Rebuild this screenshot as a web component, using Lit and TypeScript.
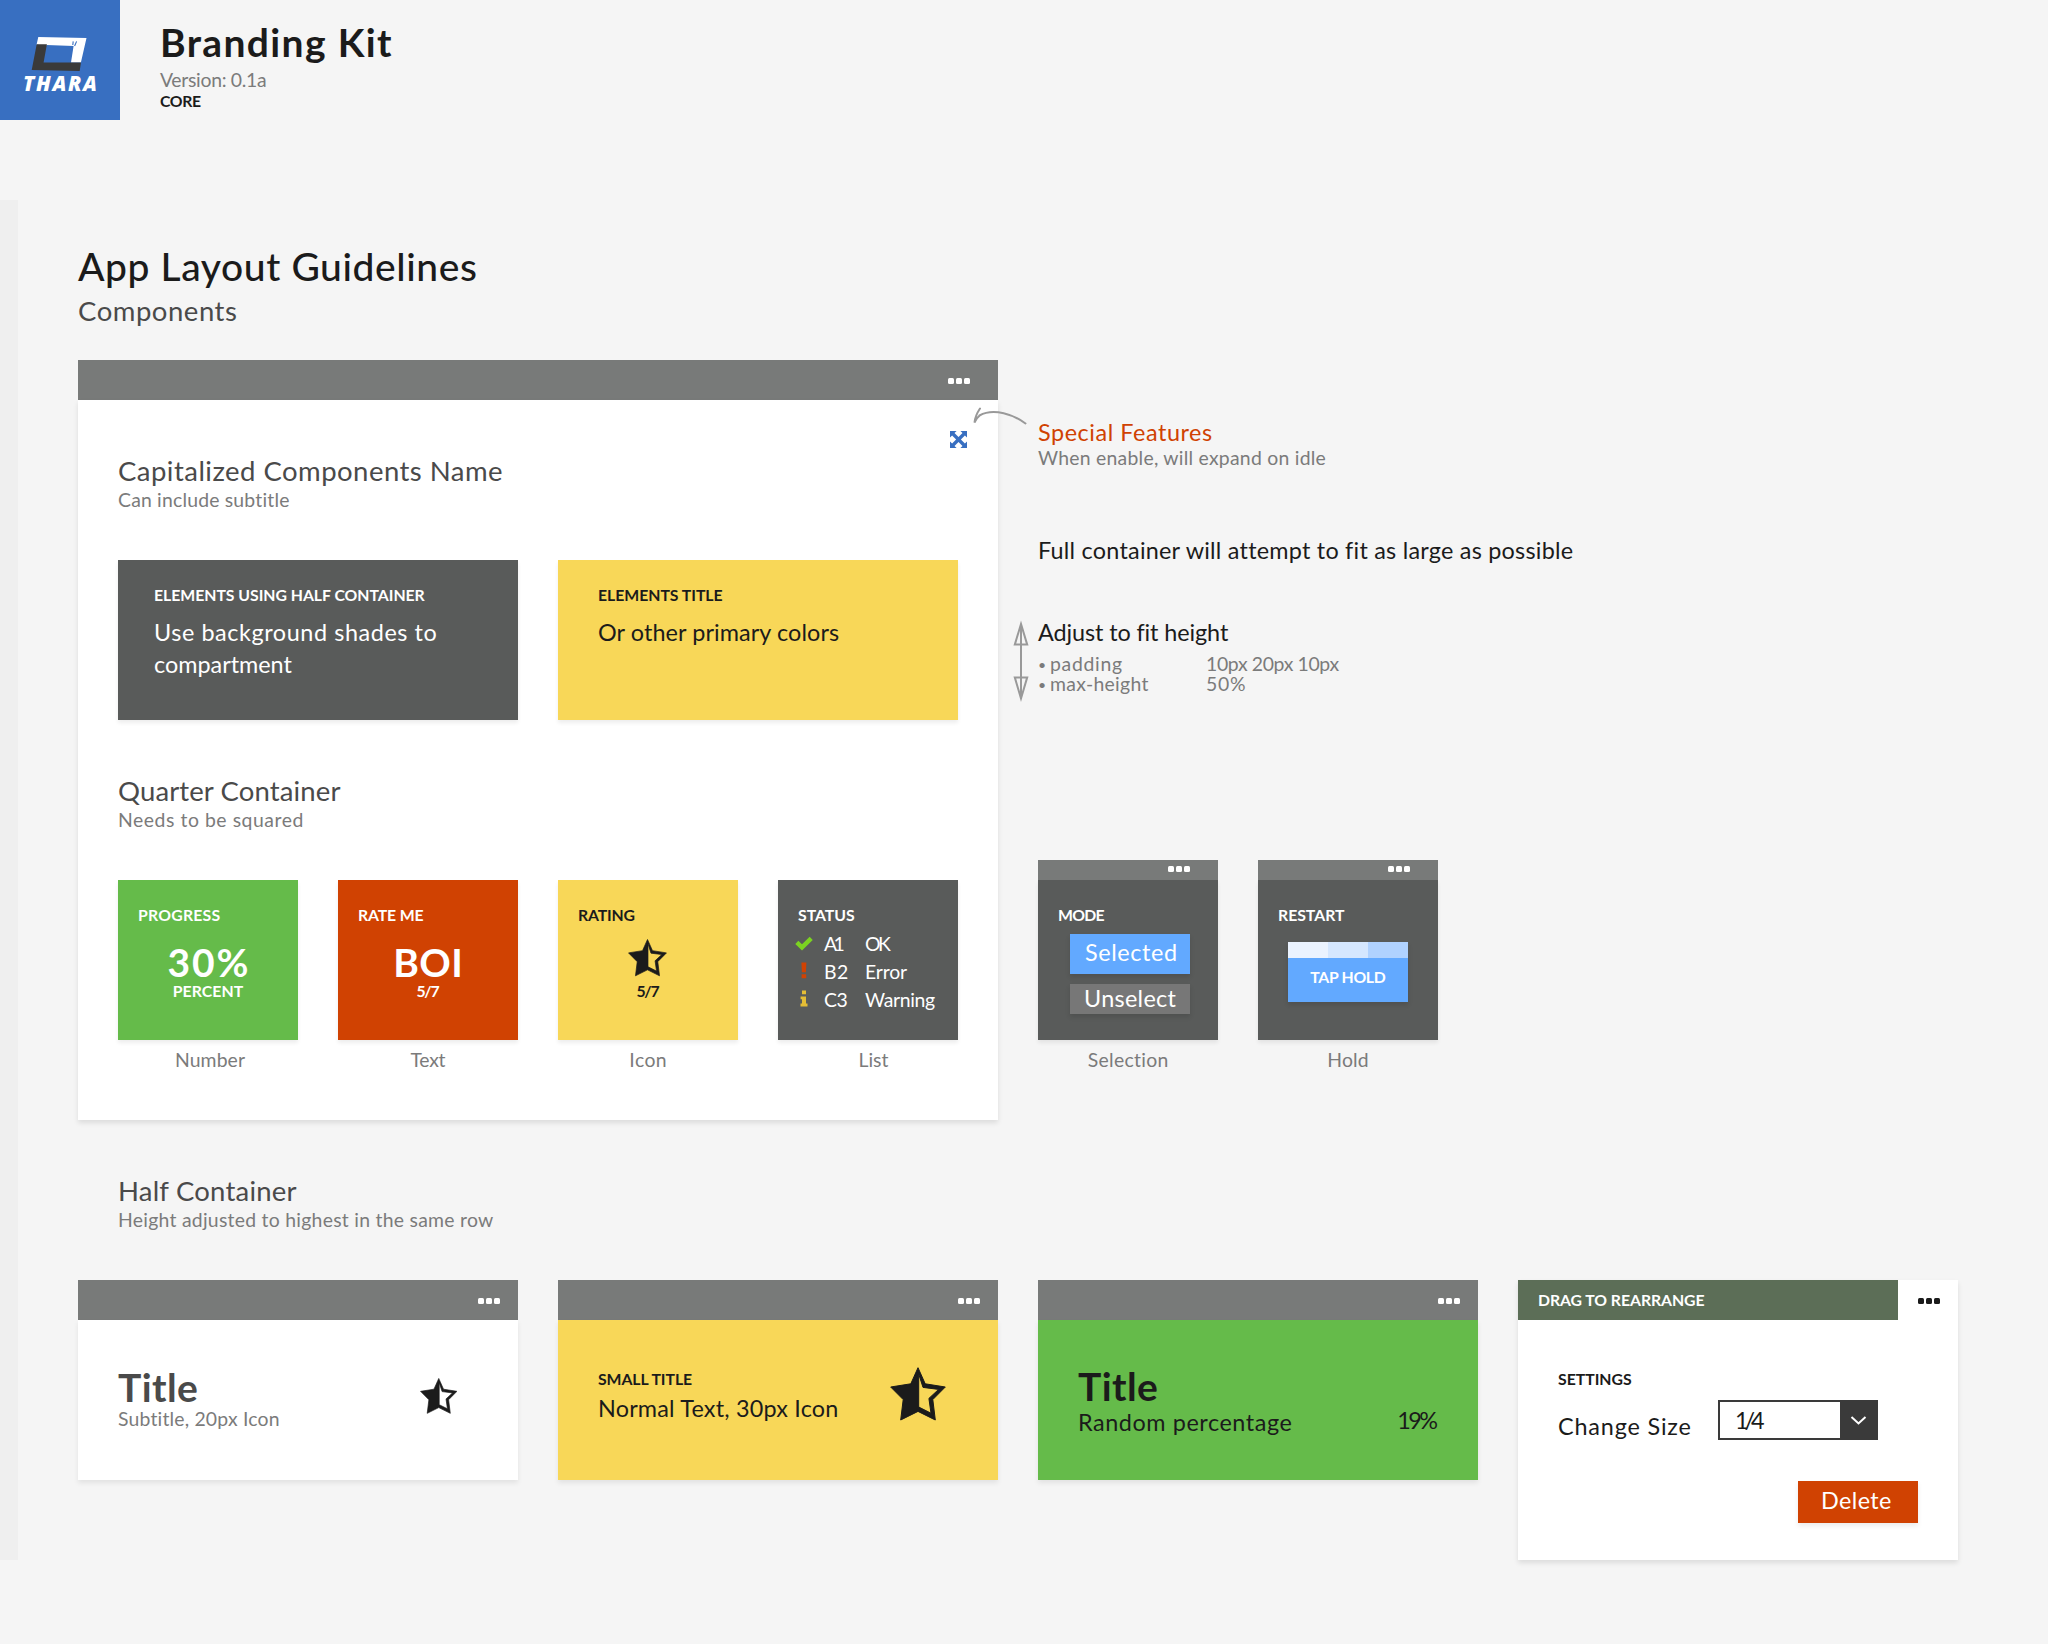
import { LitElement, html, css, svg, nothing } from "lit";
import { customElement, property } from "lit/decorators.js";

/** One line of text, tracked so that its ink spans `w` pixels. */
@customElement("fit-line")
class FitLine extends LitElement {
  @property() text = "";
  @property({ type: Number }) w = 0;
  static styles = css`
    :host { display: block; white-space: nowrap; font-variant-ligatures: none; }
  `;
  render() {
    return html`${this.text}`;
  }
  updated() {
    const cs = getComputedStyle(this);
    const ctx = document.createElement("canvas").getContext("2d")!;
    ctx.font = `${cs.fontStyle} ${cs.fontWeight} ${cs.fontSize} ${cs.fontFamily}`;
    const m = ctx.measureText(this.text);
    const ink = m.actualBoundingBoxLeft + m.actualBoundingBoxRight;
    const gap = (this.w - ink) / Math.max(1, this.text.length - 1);
    this.style.letterSpacing = `${gap.toFixed(3)}px`;
    this.style.marginRight = `${(-gap).toFixed(3)}px`;
  }
}

const line = (kind: string, text: string, w: number) =>
  html`<fit-line class=${kind} .text=${text} .w=${w}></fit-line>`;

const shared = css`
  * { box-sizing: border-box; }
  .xl, .xlm, .lg, .sm { padding-top: 2px; margin-bottom: -2px; }
  .md, .xs { padding-top: 1px; margin-bottom: -1px; }
  .xl { font-size: 39px; line-height: 40px; font-weight: 700; }
  .xlm { font-size: 39px; line-height: 40px; font-weight: 500; color: #1b1b1b; }
  .lg { font-size: 27.5px; line-height: 28px; font-weight: 400; color: #4a4a4a; }
  .md { font-size: 23.4px; line-height: 32px; font-weight: 400; }
  .sm { font-size: 19.4px; line-height: 20px; font-weight: 400; }
  .xs { font-size: 15.8px; line-height: 20px; font-weight: 700; }
  .mute { color: #7b7b7b; }
`;

@customElement("kit-dots")
class KitDots extends LitElement {
  static styles = css`
    :host { display: flex; gap: 2px; color: #fff; }
    .dot { width: 6px; height: 6px; border-radius: 1.5px; background: currentColor; }
  `;
  render() {
    return html`<i class="dot"></i><i class="dot"></i><i class="dot"></i>`;
  }
}

@customElement("kit-star")
class KitStar extends LitElement {
  static styles = css`
    :host { display: block; color: #1b1b1b; }
    svg { display: block; width: 100%; height: 100%; }
  `;
  render() {
    return html`<svg viewBox="0 0 56 54">
      <path fill="currentColor" fill-rule="evenodd" stroke="currentColor" stroke-width="1" stroke-linejoin="round"
        d="M28 .7 L35.2 16.8 L55.3 20 L42.8 32.6 L45.3 53 L28 44.4 L10.7 53 L13.2 32.6 L.7 20 L20.8 16.8 Z
           M28.7 7 V40 L41 46.2 L38.9 31.4 L48.6 22.4 L33 20.4 Z"/>
    </svg>`;
  }
}

@customElement("kit-heading")
class KitHeading extends LitElement {
  @property({ attribute: false }) name: [string, number] = ["", 0];
  @property({ attribute: false }) sub: [string, number] = ["", 0];
  static styles = [shared, css`
    :host { display: block; height: 160px; padding: 55px 0 0; }
    .sm { margin-top: 5px; }
  `];
  render() {
    return html`${line("lg", ...this.name)}${line("sm mute", ...this.sub)}`;
  }
}

@customElement("kit-tile")
class KitTile extends LitElement {
  @property({ attribute: false }) label: [string, number] = ["", 0];
  @property({ attribute: false }) caption: [string, number] = ["", 0];
  @property() tone = "dark";
  @property() shift = "";
  @property({ type: Boolean }) bar = false;
  static styles = [shared, css`
    :host { display: block; width: 180px; }
    .bar { height: 20px; background: #787a79; display: flex; justify-content: flex-end; padding: 6px 28px 0 0; }
    .box { height: 160px; padding: 24px 0 0; color: #fff; box-shadow: 0 3px 4px rgba(0,0,0,.07); }
    .head { margin-left: 20px; height: 20px; }
    .green { background: #65bb4a; }
    .red { background: #d04202; }
    .yellow { background: #f8d758; color: #1b1b1b; }
    .dark { background: #595b5a; }
    .caption { display: flex; justify-content: center; padding-top: 8px; }
    .right { padding-left: 11px; }
    .nudge { padding-left: 4px; }
  `];
  render() {
    return html`
      ${this.bar ? html`<div class="bar"><kit-dots></kit-dots></div>` : nothing}
      <div class="box ${this.tone}">
        <div class="head">${line("xs", ...this.label)}</div>
        <slot></slot>
      </div>
      <div class="caption ${this.shift}">${line("sm mute", ...this.caption)}</div>
    `;
  }
}

@customElement("kit-half")
class KitHalf extends LitElement {
  @property() tone = "white";
  static styles = [shared, css`
    :host { display: block; width: 440px; }
    .bar { height: 40px; background: #787a79; display: flex; justify-content: flex-end; padding: 18px 18px 0 0; }
    .box { height: 160px; padding: 0 40px; display: flex; justify-content: space-between; box-shadow: 0 3px 5px rgba(0,0,0,.08); }
    .white { background: #fff; }
    .yellow { background: #f8d758; }
    .green { background: #65bb4a; }
  `];
  render() {
    return html`<div class="bar"><kit-dots></kit-dots></div><div class="box ${this.tone}"><slot></slot></div>`;
  }
}

const logo = svg`
  <path fill="#fff" d="M38.3 37 L86.5 38 L80.9 62.6 L71 62.6 L73.6 46 L46.6 45 L46 46 L36.6 44.6 Z"/>
  <path fill="#3a3a3a" d="M36.7 44.2 L46.9 44.2 L43.6 62.4 L81 62.4 L79.7 71 L31.7 70 Z"/>
  <path stroke="#386fc1" stroke-width="1.1" fill="none" d="M73.2 41.4 L72.8 45 M76.6 41.4 L74.6 46"/>`;

const check = html`<svg class="ico" viewBox="0 0 20 20"><path d="M2.8 9.4 L8 14.4 L17.2 5.4" fill="none" stroke="#7bd321" stroke-width="4.4" stroke-linejoin="miter"/></svg>`;
const bang = html`<svg class="ico" viewBox="0 0 20 20"><path fill="#d04202" d="M7.4 1.4 h5 l-.5 9.8 h-4 Z M7.6 13.2 h4.6 v4 h-4.6 Z"/></svg>`;
const info = html`<svg class="ico" viewBox="0 0 20 20"><path fill="#e4bd35" d="M8 1.6 h4 v3.6 h-4 Z M6.6 7.4 h5.4 v7 h1.5 v3 h-7 v-3 h1.5 v-4.2 h-1.4 Z"/></svg>`;

const status: [unknown, string, number, string, number][] = [
  [check, "A1", 19.5, "OK", 26],
  [bang, "B2", 23, "Error", 41],
  [info, "C3", 23.5, "Warning", 70],
];

@customElement("app-root")
class AppRoot extends LitElement {
  static styles = [shared, css`
    :host {
      display: block; width: 2048px; height: 1644px; overflow: hidden;
      background: #f5f5f5; color: #1b1b1b;
      font-family: Lato, "Open Sans", sans-serif;
    }
    .top { display: flex; height: 120px; }
    .logo { width: 120px; height: 120px; background: #386fc1; position: relative; }
    .logo svg { display: block; width: 120px; height: 120px; }
    .brand { position: absolute; left: 23px; top: 70.5px; color: #fff; font-family: "Open Sans", sans-serif; font-size: 20.6px; line-height: 24px; font-weight: 800; font-style: italic; }
    .name { padding: 20px 0 0 40px; }
    .name .sm { margin-top: 8px; }
    .name .xs { margin-top: 2px; }
    .main { display: flex; margin-top: 80px; }
    .strip { width: 18px; height: 1360px; background: #efefef; }
    .content { padding: 44px 0 0 60px; }
    .content > .lg { margin-top: 11px; }
    .rowtop { display: flex; gap: 40px; margin-top: 37px; }
    .panelbar { height: 40px; background: #787a79; display: flex; justify-content: flex-end; padding: 18px 28px 0 0; }
    .panel { width: 920px; }
    .panelbody { height: 720px; background: #fff; padding: 0 40px; position: relative; box-shadow: 0 3px 5px rgba(0,0,0,.1); }
    .expand { position: absolute; left: 871px; top: 30px; width: 19px; height: 19px; }
    .row { display: flex; gap: 40px; }
    .card { width: 400px; height: 160px; padding-top: 24px; box-shadow: 0 3px 4px rgba(0,0,0,.07); }
    .card .xs { margin-bottom: 10px; }
    .cdark { background: #595b5a; color: #fff; padding-left: 36px; }
    .cyellow { background: #f8d758; padding-left: 40px; }
    .big { height: 40px; margin-top: 16px; display: flex; justify-content: center; }
    .mid { display: flex; justify-content: center; }
    .list { display: grid; grid-template-columns: 30px 41px 80px; grid-auto-rows: 28px; margin: 4px 0 0 16px; }
    .list .sm { line-height: 28px; }
    .ico { width: 20px; height: 20px; margin-top: 5px; }
    .s20 { width: 39px; height: 37.5px; margin: -1px 1px 0 0; }
    .side { position: relative; padding-top: 55px; }
    .red { color: #d04202; }
    .rule { height: 20px; margin-top: -1px; }
    .note { height: 32px; }
    .full { margin-top: 67px; }
    .adjust { margin-top: 50px; }
    .props { display: grid; grid-template-columns: 12px 156px auto; grid-auto-rows: 20px; margin-top: 5px; }
    .bullet { font-size: 14px; line-height: 26px; color: #7b7b7b; }
    .extra { margin-top: 168px; }
    .pointer { position: absolute; left: -68px; top: 44px; width: 60px; height: 24px; }
    .updown { position: absolute; left: -27px; top: 259px; width: 20px; height: 88px; }
    .btn { width: 120px; color: #fff; box-shadow: 0 3px 5px rgba(0,0,0,.12); }
    .on { height: 40px; margin: 10px 0 0 32px; padding-left: 15px; background: #62a9ff; }
    .on .md { line-height: 34px; }
    .off { height: 30px; margin: 10px 0 0 32px; padding-left: 14px; background: #777; }
    .off .md { line-height: 26px; }
    .hold { height: 60px; margin: 18px 0 0 30px; background: #62a9ff; }
    .segs { display: grid; grid-template-columns: repeat(3, 40px); height: 16px; }
    .g1 { background: #ebf3ff; }
    .g2 { background: #d5e7ff; }
    .g3 { background: #b0d2ff; }
    .hold .xs { line-height: 36px; }
    .inset { padding-left: 40px; }
    .halves { display: flex; gap: 40px; }
    .t1 { padding-top: 45px; color: #4a4a4a; }
    .t1 .sm { margin-top: 2px; }
    .t2 { padding-top: 48px; }
    .t2 .md { margin-top: 3px; }
    .t3 { padding-top: 44px; }
    .t3 .md { margin-top: 1px; }
    .st1 { width: 37.5px; height: 36px; margin: 58px 21px 0 0; }
    .st2 { width: 56px; height: 54px; margin: 47px 12px 0 0; }
    .pct { padding-top: 83px; }
    .settings { width: 440px; height: 280px; background: #fff; box-shadow: 0 3px 5px rgba(0,0,0,.1); }
    .sbar { display: flex; }
    .drag { width: 380px; height: 40px; padding: 9px 0 0 20px; background: #5c6e57; color: #fff; }
    .sbar kit-dots { color: #1b1b1b; padding: 18px 0 0 20px; }
    .sbody { padding: 48px 40px 0; }
    .cap { height: 20px; }
    .change { display: flex; margin-top: 12px; }
    .lab { width: 160px; padding-top: 9px; }
    .select { width: 160px; height: 40px; border: 2px solid #3a3a3a; display: flex; justify-content: space-between; padding-left: 15px; }
    .select .md { line-height: 34px; }
    .arrow { width: 36px; height: 36px; background: #3a3a3a; }
    .del { height: 42px; margin: 40px 0 0 240px; padding-left: 23px; background: #d04202; box-shadow: 0 3px 5px rgba(0,0,0,.08); }
    .del .md { line-height: 37px; }
  `];

  render() {
    return html`
      <header class="top">
        <div class="logo">
          <svg viewBox="0 0 120 120">${logo}</svg>
          <div class="brand">${line("", "THARA", 72)}</div>
        </div>
        <div class="name">
          ${line("xl", "Branding Kit", 229)}
          ${line("sm mute", "Version: 0.1a", 106)}
          ${line("xs", "CORE", 41)}
        </div>
      </header>
      <main class="main">
        <div class="strip"></div>
        <div class="content">
          ${line("xlm", "App Layout Guidelines", 398)}
          ${line("lg", "Components", 157)}
          <div class="rowtop">
            <section class="panel">
              <div class="panelbar"><kit-dots></kit-dots></div>
              <div class="panelbody">
                <svg class="expand" viewBox="0 0 19 19">
                  <path fill="#386fc1" d="M1 1h6.6L5.5 3.1 8 5.6 9.5 7.1 11 5.6l2.5-2.5L11.4 1H18v6.6l-2.1-2.1L13.4 8l-1.5 1.5 1.5 1.5 2.5 2.5 2.1-2.1V18h-6.6l2.1-2.1-2.5-2.5-1.5-1.5L8 13.4l-2.5 2.5L7.6 18H1v-6.6l2.1 2.1L5.6 11l1.5-1.5L5.6 8 3.1 5.5 1 7.6Z"/>
                </svg>
                <kit-heading .name=${["Capitalized Components Name", 383]} .sub=${["Can include subtitle", 171.5]}></kit-heading>
                <div class="row">
                  <div class="card cdark">
                    ${line("xs", "ELEMENTS USING HALF CONTAINER", 271)}
                    ${line("md", "Use background shades to", 281.5)}
                    ${line("md", "compartment", 138.5)}
                  </div>
                  <div class="card cyellow">
                    ${line("xs", "ELEMENTS TITLE", 124)}
                    ${line("md", "Or other primary colors", 241.5)}
                  </div>
                </div>
                <kit-heading .name=${["Quarter Container", 222]} .sub=${["Needs to be squared", 183.5]}></kit-heading>
                <div class="row">
                  <kit-tile tone="green" shift="nudge" .label=${["PROGRESS", 81.5]} .caption=${["Number", 69]}>
                    <div class="big">${line("xl", "30%", 79)}</div>
                    <div class="mid">${line("xs", "PERCENT", 70)}</div>
                  </kit-tile>
                  <kit-tile tone="red" .label=${["RATE ME", 64.5]} .caption=${["Text", 35]}>
                    <div class="big">${line("xl", "BOI", 64)}</div>
                    <div class="mid">${line("xs", "5/7", 23)}</div>
                  </kit-tile>
                  <kit-tile tone="yellow" .label=${["RATING", 55.5]} .caption=${["Icon", 35.5]}>
                    <div class="big"><kit-star class="s20"></kit-star></div>
                    <div class="mid">${line("xs", "5/7", 23)}</div>
                  </kit-tile>
                  <kit-tile tone="dark" shift="right" .label=${["STATUS", 57]} .caption=${["List", 29]}>
                    <div class="list">
                      ${status.map(([icon, id, w1, text, w2]) => html`${icon}${line("sm", id, w1)}${line("sm", text, w2)}`)}
                    </div>
                  </kit-tile>
                </div>
              </div>
            </section>
            <aside class="side">
              <svg class="pointer" viewBox="0 0 60 24" fill="none" stroke="#999" stroke-width="2" stroke-linecap="round">
                <path d="M55.5 19.5 C44 11 24 3.5 9.5 11.5 M10 4.5 C7 9 5 13 4.5 18.5 C6 15.5 7.5 13 9.8 11.4"/>
              </svg>
              <svg class="updown" viewBox="0 0 20 88" fill="none" stroke="#999" stroke-width="2">
                <path d="M10 5 V80 M10 5 L3.8 25.6 H16.2 Z M10 79.5 L3.8 58.4 H16.2 Z"/>
              </svg>
              <div class="note red">${line("md", "Special Features", 174)}</div>
              <div class="rule">${line("sm mute", "When enable, will expand on idle", 288)}</div>
              <div class="note full">${line("md", "Full container will attempt to fit as large as possible", 532.5)}</div>
              <div class="note adjust">${line("md", "Adjust to fit height", 190.5)}</div>
              <div class="props">
                <span class="bullet">•</span>${line("sm mute", "padding", 71)}${line("sm mute", "10px 20px 10px", 132.5)}
                <span class="bullet">•</span>${line("sm mute", "max-height", 97.5)}${line("sm mute", "50%", 38)}
              </div>
              <div class="row extra">
                <kit-tile bar .label=${["MODE", 45.5]} .caption=${["Selection", 80]}>
                  <div class="btn on">${line("md", "Selected", 91)}</div>
                  <div class="btn off">${line("md", "Unselect", 91.5)}</div>
                </kit-tile>
                <kit-tile bar .label=${["RESTART", 66]} .caption=${["Hold", 39.5]}>
                  <div class="btn hold">
                    <div class="segs"><i class="g1"></i><i class="g2"></i><i class="g3"></i></div>
                    <div class="mid">${line("xs", "TAP HOLD", 76)}</div>
                  </div>
                </kit-tile>
              </div>
            </aside>
          </div>
          <div class="inset">
            <kit-heading .name=${["Half Container", 177]} .sub=${["Height adjusted to highest in the same row", 374]}></kit-heading>
          </div>
          <div class="halves">
            <kit-half>
              <div class="t1">${line("xl", "Title", 79)}${line("sm mute", "Subtitle, 20px Icon", 161)}</div>
              <kit-star class="st1"></kit-star>
            </kit-half>
            <kit-half tone="yellow">
              <div class="t2">${line("xs", "SMALL TITLE", 95)}${line("md", "Normal Text, 30px Icon", 238)}</div>
              <kit-star class="st2"></kit-star>
            </kit-half>
            <kit-half tone="green">
              <div class="t3">${line("xl", "Title", 79)}${line("md", "Random percentage", 211.5)}</div>
              <div class="pct">${line("md", "19%", 39)}</div>
            </kit-half>
            <section class="settings">
              <div class="sbar">
                <div class="drag">${line("xs", "DRAG TO REARRANGE", 166)}</div>
                <kit-dots></kit-dots>
              </div>
              <div class="sbody">
                <div class="cap">${line("xs", "SETTINGS", 74)}</div>
                <div class="change">
                  <div class="lab">${line("md", "Change Size", 131.5)}</div>
                  <div class="select">
                    ${line("md", "1/4", 28)}
                    <svg class="arrow" viewBox="0 0 36 36"><path d="M11.5 15 L18.5 21.5 L25.5 15" fill="none" stroke="#fff" stroke-width="2"/></svg>
                  </div>
                </div>
                <div class="btn del">${line("md", "Delete", 68)}</div>
              </div>
            </section>
          </div>
        </div>
      </main>
    `;
  }
}
